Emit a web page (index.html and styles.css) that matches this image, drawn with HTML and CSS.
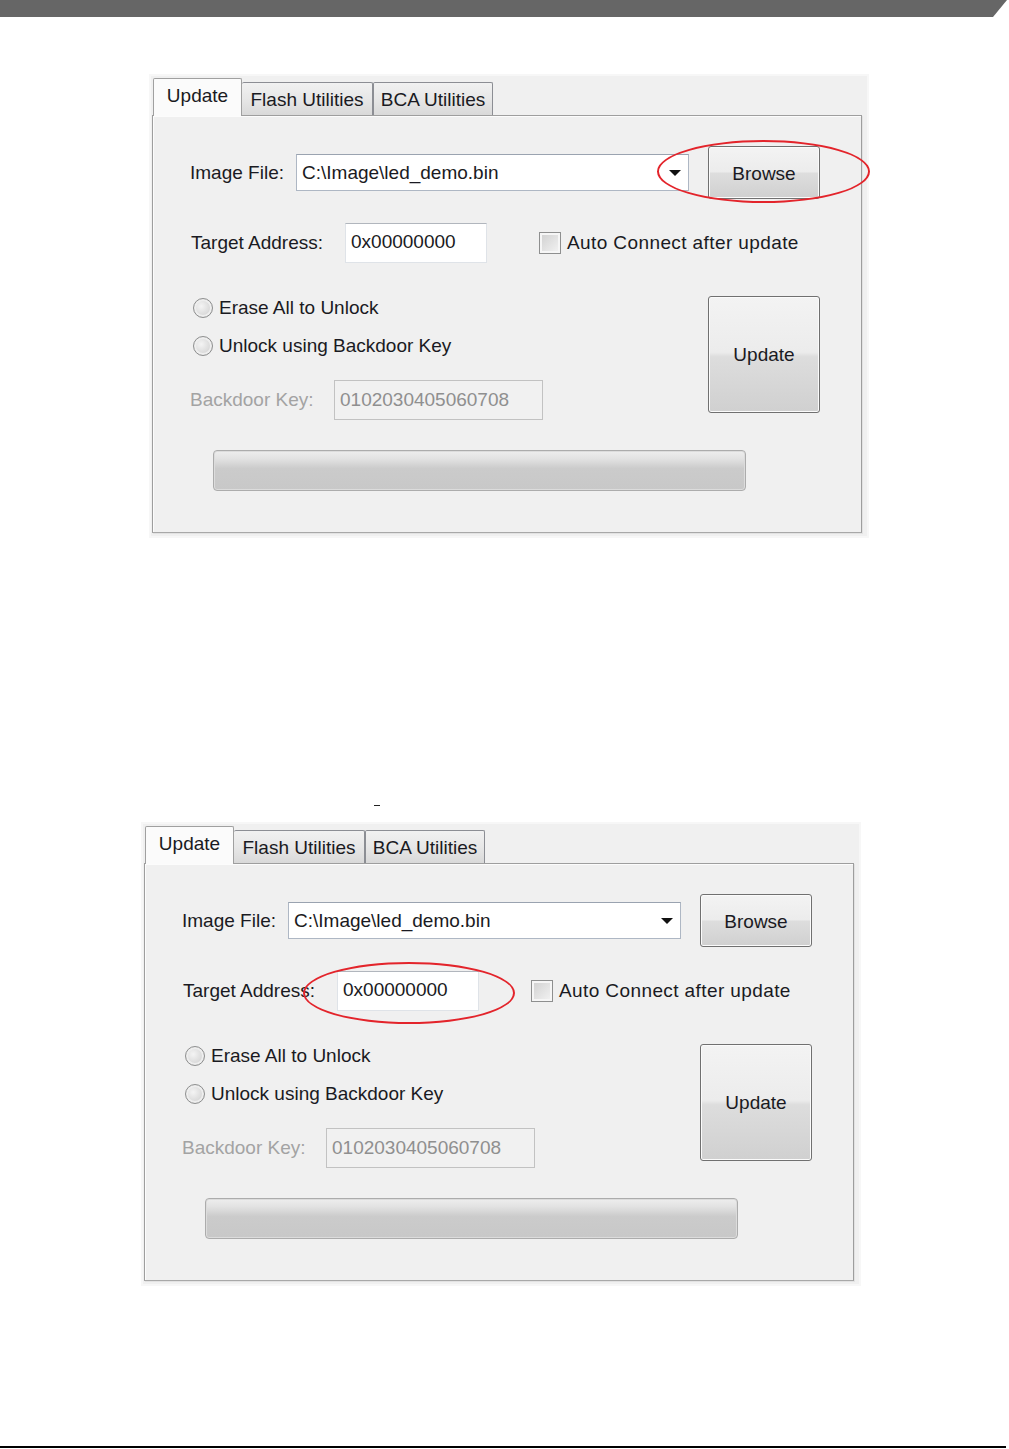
FILE: index.html
```html
<!DOCTYPE html>
<html>
<head>
<meta charset="utf-8">
<title>Update</title>
<link rel="stylesheet" href="styles.css">
</head>
<body>
<div class="topbar"></div>

<div class="shot shot-1">
  <div class="tabs">
    <div class="tab tab-active">Update</div>
    <div class="tab tab-flash">Flash Utilities</div>
    <div class="tab tab-bca">BCA Utilities</div>
  </div>
  <div class="frame">
    <div class="row row-file">
      <span class="label label-file">Image File:</span>
      <div class="combo"><span class="combo-text">C:\Image\led_demo.bin</span><span class="combo-arrow"></span></div>
      <div class="btn btn-browse">Browse</div>
    </div>
    <div class="row row-addr">
      <span class="label label-addr">Target Address:</span>
      <div class="input input-addr">0x00000000</div>
      <span class="check"></span>
      <span class="check-text">Auto Connect after update</span>
    </div>
    <div class="lower">
      <div class="lower-left">
        <div class="radio-row"><span class="radio"></span><span>Erase All to Unlock</span></div>
        <div class="radio-row radio-row-2"><span class="radio"></span><span>Unlock using Backdoor Key</span></div>
        <div class="row row-key">
          <span class="label label-key">Backdoor Key:</span>
          <div class="input input-key">0102030405060708</div>
        </div>
      </div>
      <div class="btn btn-update">Update</div>
    </div>
    <div class="progress"></div>
    <div class="ring ring-browse"></div>
  </div>
</div>

<div class="caret"></div>

<div class="shot shot-2">
  <div class="tabs">
    <div class="tab tab-active">Update</div>
    <div class="tab tab-flash">Flash Utilities</div>
    <div class="tab tab-bca">BCA Utilities</div>
  </div>
  <div class="frame">
    <div class="row row-file">
      <span class="label label-file">Image File:</span>
      <div class="combo"><span class="combo-text">C:\Image\led_demo.bin</span><span class="combo-arrow"></span></div>
      <div class="btn btn-browse">Browse</div>
    </div>
    <div class="row row-addr">
      <span class="label label-addr">Target Address:</span>
      <div class="input input-addr">0x00000000</div>
      <span class="check"></span>
      <span class="check-text">Auto Connect after update</span>
    </div>
    <div class="lower">
      <div class="lower-left">
        <div class="radio-row"><span class="radio"></span><span>Erase All to Unlock</span></div>
        <div class="radio-row radio-row-2"><span class="radio"></span><span>Unlock using Backdoor Key</span></div>
        <div class="row row-key">
          <span class="label label-key">Backdoor Key:</span>
          <div class="input input-key">0102030405060708</div>
        </div>
      </div>
      <div class="btn btn-update">Update</div>
    </div>
    <div class="progress"></div>
    <div class="ring ring-addr"></div>
  </div>
</div>

<div class="footline"></div>
</body>
</html>
```

FILE: styles.css
```css
* { box-sizing: border-box; }

html, body {
  margin: 0;
  padding: 0;
  background: #ffffff;
}

body {
  width: 1009px;
  height: 1449px;
  overflow: hidden;
  font-family: "Liberation Sans", Arial, sans-serif;
  font-size: 19px;
  color: #1a1a22;
}

.topbar {
  width: 1007px;
  height: 17px;
  background: #666666;
  clip-path: polygon(0 0, 100% 0, calc(100% - 14px) 100%, 0 100%);
}

.shot {
  width: 720px;
  height: 464px;
  background: #f0f0f0;
  padding: 4px 7px 5px 3px;
  box-shadow: inset 0 0 0 2px #f7f7f7;
}

.shot-1 { margin: 57px 0 0 149px; }
.shot-2 { margin: 16px 0 0 141px; }

.caret {
  width: 6px;
  height: 1px;
  background: #222;
  margin: 267px 0 0 374px;
}

.tabs {
  display: flex;
  align-items: flex-end;
  height: 37px;
  padding-left: 1px;
  position: relative;
  z-index: 2;
}

.tab {
  height: 33px;
  display: flex;
  align-items: center;
  justify-content: center;
  border: 1px solid #8c8e94;
  border-bottom: none;
  border-radius: 2px 2px 0 0;
  background: linear-gradient(#f1f1f1 0%, #e7e7e7 50%, #d9d9d9 100%);
  color: #1a1a22;
  padding-top: 2px;
}

.tab-active {
  height: 38px;
  margin-bottom: -1px;
  background: #fbfbfb;
  border-color: #a0a0a0;
  width: 89px;
  padding-top: 0;
  padding-bottom: 4px;
}

.tab-flash { width: 131px; border-left: none; }
.tab-bca { width: 120px; border-left: 1px solid #8c8e94; }

.frame {
  position: relative;
  width: 710px;
  height: 418px;
  border: 1px solid #9e9e9e;
  border-bottom-color: #a8a8a8;
  box-shadow: inset 1px 1px 0 #fcfcfc, 1px 1px 0 #e2e2e2;
  padding: 30px 0 0 37px;
  background: #f0f0f0;
}

.row {
  display: flex;
  align-items: center;
}

.label { white-space: nowrap; }

.row-file { height: 53px; }
.label-file { width: 106px; }

.combo {
  width: 393px;
  height: 37px;
  background: #ffffff;
  border: 1px solid #aeb7c4;
  border-top-color: #9aa3b0;
  display: flex;
  align-items: center;
  justify-content: space-between;
  padding: 0 7px 0 5px;
}

.combo-arrow {
  width: 0;
  height: 0;
  border-left: 6px solid transparent;
  border-right: 6px solid transparent;
  border-top: 6px solid #111;
  margin-top: 1px;
}

.btn {
  display: flex;
  align-items: center;
  justify-content: center;
  border: 1px solid #707070;
  border-radius: 3px;
  background: linear-gradient(#f3f3f3 0%, #ececec 48%, #dddddd 52%, #d0d0d0 100%);
  box-shadow: inset 0 0 0 1px #fbfbfb;
  color: #1a1a22;
}

.btn-browse {
  width: 112px;
  height: 53px;
  margin-left: 19px;
  padding-top: 2px;
}

.row-addr { height: 40px; margin-top: 24px; }
.label-addr { width: 155px; padding-left: 1px; }

.input {
  height: 40px;
  background: #ffffff;
  border: 1px solid #dfe3e8;
  border-top-color: #b1b6bd;
  display: flex;
  align-items: center;
  padding: 0 5px;
  white-space: nowrap;
}

.input-addr { width: 142px; padding-bottom: 2px; }

.check {
  width: 22px;
  height: 22px;
  margin-left: 52px;
  border: 1px solid #8e8f8f;
  background: linear-gradient(135deg, #cfcfcf, #f4f4f4);
  box-shadow: inset 0 0 0 2px #f6f6f6;
}

.check-text {
  margin-left: 6px;
  white-space: nowrap;
  letter-spacing: 0.4px;
}

.lower {
  display: flex;
  justify-content: space-between;
  margin-top: 33px;
  width: 630px;
}

.radio-row {
  display: flex;
  align-items: center;
  height: 24px;
  padding-left: 3px;
  gap: 6px;
  white-space: nowrap;
}

.radio-row-2 { margin-top: 14px; }

.radio {
  width: 20px;
  height: 20px;
  border-radius: 50%;
  border: 1px solid #8e8f8f;
  background: radial-gradient(circle at 40% 40%, #f4f4f4 0%, #dcdcdc 55%, #c9c9c9 100%);
  box-shadow: inset 0 0 0 2px #eeeeee;
}

.row-key { height: 40px; margin-top: 22px; }
.label-key { width: 144px; color: #a3a3a3; }

.input-key {
  width: 209px;
  background: #f1f1f1;
  border: 1px solid #c2c2c2;
  color: #8f8f8f;
}

.btn-update {
  width: 112px;
  height: 117px;
}

.progress {
  width: 533px;
  height: 41px;
  margin: 30px 0 0 23px;
  border: 1px solid #acacac;
  border-radius: 4px;
  background: linear-gradient(#eeeeee 0%, #e2e2e2 20%, #cbcbcb 45%, #c8c8c8 100%);
  box-shadow: inset 0 0 0 1px #dcdcdc;
}

.ring {
  position: absolute;
  border: 2px solid #e3242b;
  border-radius: 50%;
}

.ring-browse {
  left: 504px;
  top: 24px;
  width: 213px;
  height: 63px;
}

.ring-addr {
  left: 158px;
  top: 98px;
  width: 212px;
  height: 62px;
}

.footline {
  width: 1006px;
  height: 2px;
  background: #000000;
  margin-top: 160px;
}
```
